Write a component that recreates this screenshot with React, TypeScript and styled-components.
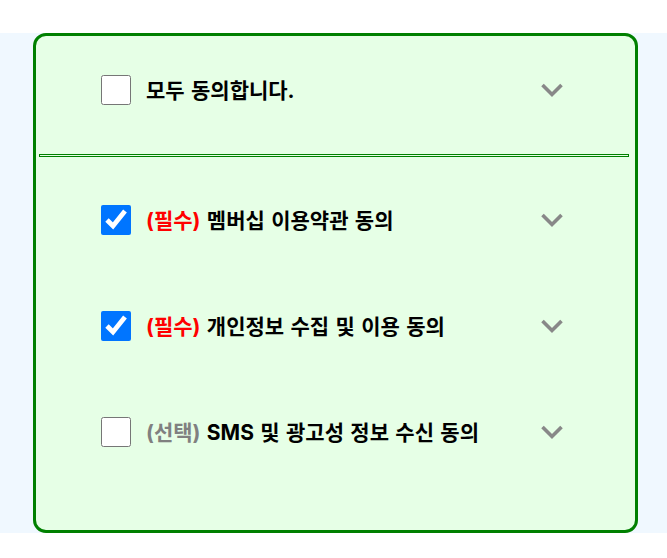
import React, { useState } from "react";
import styled, { createGlobalStyle } from "styled-components";

const GlobalStyle = createGlobalStyle`
  html, body {
    margin: 0;
    padding: 0;
    background: #ffffff;
    font-family: Inter, "Noto Sans CJK KR", sans-serif;
  }
`;

const Page = styled.div`
  padding-top: 33px;
`;

const Band = styled.section`
  background: #f0f8ff;
  padding-left: 33px;
`;

const Card = styled.div`
  box-sizing: border-box;
  width: 605px;
  height: 500px;
  border: 3px solid #008000;
  border-radius: 13px;
  background: #e6ffe6;
  display: flex;
  flex-direction: column;
  padding-top: 1px;
`;

const Row = styled.label`
  height: 106px;
  display: flex;
  align-items: center;
  padding-left: 65px;
  padding-right: 71px;
  cursor: pointer;
`;

const Check = styled.input`
  width: 30px;
  height: 30px;
  margin: 0 15px 0 0;
  flex: none;
`;

const Label = styled.span`
  flex: 1;
  font-family: Inter, "Noto Sans CJK KR", sans-serif;
  font-size: 21px;
  font-weight: 700;
  color: #000;
  line-height: 1;
  word-spacing: 1.4px;
  white-space: nowrap;
`;

const Tag = styled.span<{ $tone: "required" | "optional" }>`
  color: ${(p) => (p.$tone === "required" ? "#ff0000" : "#808080")};
`;

const Divider = styled.div`
  height: 1px;
  width: 588px;
  border: 1px solid #008000;
  margin: 11px 0 10px 3px;
`;

const Chevron = () => (
  <svg width="24" height="16" viewBox="0 0 24 16" aria-hidden="true">
    <polyline
      points="2.5,3 12,12.5 21.5,3"
      fill="none"
      stroke="#888888"
      strokeWidth="3.6"
    />
  </svg>
);

type Item = { tag: string; tone: "required" | "optional"; text: string; checked: boolean };

const items: Item[] = [
  { tag: "(필수)", tone: "required", text: "멤버십 이용약관 동의", checked: true },
  { tag: "(필수)", tone: "required", text: "개인정보 수집 및 이용 동의", checked: true },
  { tag: "(선택)", tone: "optional", text: "SMS 및 광고성 정보 수신 동의", checked: false },
];

export default function App() {
  const [all, setAll] = useState(false);
  const [checks, setChecks] = useState(items.map((i) => i.checked));
  return (
    <>
      <GlobalStyle />
      <Page>
        <Band>
          <Card>
            <Row>
              <Check type="checkbox" checked={all} onChange={(e) => setAll(e.target.checked)} />
              <Label>모두 동의합니다.</Label>
              <Chevron />
            </Row>
            <Divider />
            {items.map((it, i) => (
              <Row key={i}>
                <Check
                  type="checkbox"
                  checked={checks[i]}
                  onChange={(e) => {
                    const n = [...checks];
                    n[i] = e.target.checked;
                    setChecks(n);
                  }}
                />
                <Label>
                  <Tag $tone={it.tone}>{it.tag}</Tag> {it.text}
                </Label>
                <Chevron />
              </Row>
            ))}
          </Card>
        </Band>
      </Page>
    </>
  );
}
